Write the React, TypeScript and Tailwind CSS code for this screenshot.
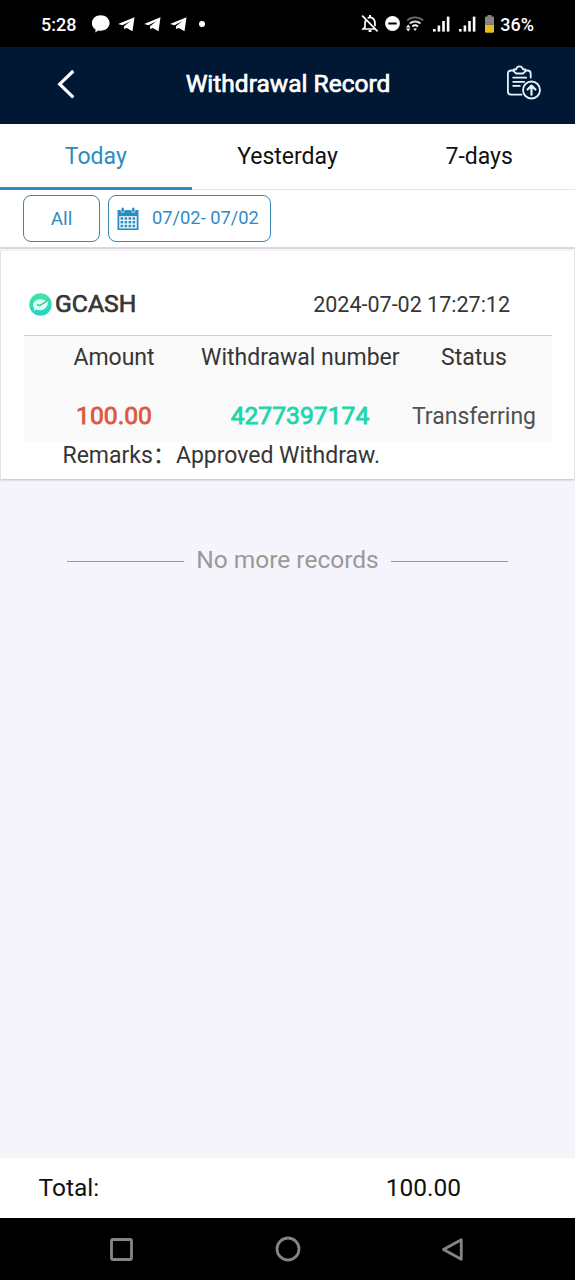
/*
  Withdrawal Record — mobile screen listing withdrawals for a chosen period.

  Layout:
    Top    — Android status bar, page header, period tabs, filter chips
    Middle — Record cards followed by the "No more records" divider
    Bottom — Running total and the Android navigation bar
*/
import { useState } from "react";

const tabs = ["Today", "Yesterday", "7-days"];

const records = [
  {
    method: "GCASH",
    date: "2024-07-02 17:27:12",
    amount: "100.00",
    number: "4277397174",
    status: "Transferring",
    remarks: "Approved Withdraw.",
  },
];

function PlaneIcon() {
  return (
    <svg className="h-[15px] w-[17px]" viewBox="0 0 17 15" fill="currentColor">
      <path d="M16.500.2 14.500 14.300 8.800 11 6.200 12 6 9.300 12.300 4.200 4.500 8.200.1 7Z" />
    </svg>
  );
}

function SignalIcon() {
  return (
    <svg className="h-4 w-[17px]" viewBox="0 0 17 16" fill="currentColor">
      <rect x="0" y="13" width="2.6" height="2.6" />
      <rect x="4.6" y="9.5" width="2.6" height="6.1" />
      <rect x="9.2" y="5" width="2.6" height="10.6" />
      <rect x="13.8" y="0.6" width="2.6" height="15" />
    </svg>
  );
}

function StatusBar() {
  return (
    <div className="flex h-[47px] shrink-0 items-center bg-black pl-[41px] text-[18px] font-medium text-white">
      <span className="w-[50px] pt-px">5:28</span>
      {/* Notifications */}
      <div className="flex items-center">
        <svg className="mr-[8px] h-[18px] w-[19px]" viewBox="0 0 19 18" fill="currentColor">
          <path d="M9.700.3C14.800.3 18.600 3.700 18.600 8.100S14.800 15.800 9.700 15.800C8.700 15.800 7.800 15.800 7 15.600L4.400 17.500 4.500 14.500C2.100 13.100.9 10.900.9 8.100.9 3.700 4.700.3 9.700.3Z" />
        </svg>
        <div className="mt-[2px] flex gap-[9px]">
          <PlaneIcon />
          <PlaneIcon />
          <PlaneIcon />
        </div>
        <span className="ml-[12px] size-[6px] rounded-full bg-white" />
      </div>

      {/* System icons */}
      <div className="ml-auto flex items-center pr-[41px]">
        <svg className="h-[19px] w-[18px]" viewBox="0 0 18 19" fill="none" stroke="currentColor" strokeWidth="1.700">
          <path d="M1.200 1.600 16.600 17.400M5.200 5.600C4.200 6.800 4 8 4 9.600V13.200L2.200 15H13.800M6.700 4.200C8 3.200 10.200 3.200 11.600 4.200 13.400 5.300 14 7 14 9.500V12.200" />
          <path d="M9 1V3.200M7.600 17H10.400" strokeWidth="2" />
        </svg>
        <svg className="ml-[6px] size-[15px]" viewBox="0 0 15 15">
          <circle cx="7.500" cy="7.500" r="7.400" fill="white" />
          <rect x="3.300" y="6.500" width="8.400" height="2" fill="black" />
        </svg>
        <svg className="ml-[6px] h-[16px] w-[18px]" viewBox="0 0 18 16" fill="none" strokeWidth="1.900">
          <path d="M1.200 4.400C5.700.3 12.500.3 17 4.400" stroke="#6b6b6b" />
          <path d="M3.800 7.500C6.800 4.800 11.500 4.800 14.500 7.500" stroke="#dedede" />
          <path d="M6.300 10.400C8 9 10.200 9 12 10.400" stroke="white" />
          <path d="M7.300 12.600H10.900L9.100 15Z" fill="white" />
          <path d="M0 11.600 2.200 8.500 4.400 11.600ZM0 12.400 2.200 15.500 4.400 12.400Z" fill="white" />
        </svg>
        <div className="ml-[9px] flex gap-[9px]">
          <SignalIcon />
          <SignalIcon />
        </div>
        <svg className="ml-[9px] h-[18px] w-[9px]" viewBox="0 0 9 18">
          <path d="M2.500 0H6.500V1.500H8.200L9 2.300V9.700H0V2.300L.8 1.500H2.500Z" fill="#858585" />
          <path d="M0 9.700H9V16.800L8.200 17.700H.8L0 16.800Z" fill="#e8bd24" />
        </svg>
        <span className="ml-[6px] pt-px">36%</span>
      </div>
    </div>
  );
}

function Header() {
  return (
    <header className="grid h-[77px] shrink-0 grid-cols-[120px_1fr_120px] items-center bg-[#001833] text-white">
      <button aria-label="Back" className="mb-[3px] ml-[57px] w-[18px]">
        <svg className="h-[30px] w-[18px]" viewBox="0 0 18 30" fill="none" stroke="currentColor" strokeWidth="3.200">
          <path d="M16.300 2 2.700 15.200 16.300 28.400" />
        </svg>
      </button>
      <h1 className="pb-[2px] pl-px text-center text-[24.5px] whitespace-nowrap [-webkit-text-stroke:0.7px]">
        Withdrawal Record
      </h1>
      <button aria-label="Withdrawal requests" className="mb-[6px] ml-[51px] w-[36px]">
        <svg
          className="h-[35px] w-[36px]"
          viewBox="0 0 36 35"
          fill="none"
          stroke="#e6f4ff"
          strokeWidth="1.800"
          strokeLinecap="round"
          strokeLinejoin="round"
        >
          <path d="M7.500 5.500H5.500C3.100 5.500 1.900 6.500 1.900 8.700V26.500C1.900 28.700 3 29.700 5.200 29.700H15.500M19.500 5.500H21.500C23.700 5.500 24.700 6.500 24.700 8.700V12.500" />
          <path d="M7.800 4.300H10.200C10.600 2.300 11.600 1.300 13.500 1.300S16.500 2.300 16.900 4.300H19.400V6.300L17 8.500H10.200L7.800 6.300Z" />
          <path d="M7.200 12.700H20.200M7.200 16.800H18.200M7.200 20.900H13.800" />
          <circle cx="25.500" cy="25" r="8.500" />
          <path d="M25.500 29.700V20.800M21.600 24.500 25.500 20.600 29.400 24.500" strokeWidth="2.200" />
        </svg>
      </button>
    </header>
  );
}

function CalendarIcon() {
  return (
    <svg className="h-6 w-[22px]" viewBox="0 0 22 24">
      <path d="M.5 3H21.500V23H.5Z" fill="#2b8cc4" />
      <path d="M2.300 9.200H19.700V21.400H2.300Z" fill="white" />
      <g fill="#2b8cc4" stroke="white" strokeWidth="0.700">
        <rect x="4" y="0.300" width="3.400" height="5.200" rx="1.700" />
        <rect x="14.600" y="0.300" width="3.400" height="5.200" rx="1.700" />
      </g>
      <path
        d="M3.500 11.600H18.500M3.500 15.300H18.500M3.500 19H18.500"
        stroke="#2b8cc4"
        strokeWidth="2.500"
        strokeDasharray="2.700 1.300"
      />
    </svg>
  );
}

function RecordCard({ record }: { record: (typeof records)[number] }) {
  return (
    <article className="mt-[2px] h-[228px] shrink-0 border-x border-[#e2e2e6] bg-white pr-[22px] pl-[23px] text-[23px] text-[#363636] shadow-[0_1px_2px_rgba(0,0,0,0.22)]">
      <div className="flex h-[85px] items-center justify-between border-b border-[#cfcfcf] pt-[21px] pr-[42px] pl-[5px]">
        <div className="flex items-center">
          <svg className="mt-[3px] size-[23px]" viewBox="0 0 23 23">
            <defs>
              <linearGradient id="coin" x1="0" y1="0" x2="0" y2="1">
                <stop stopColor="#41e7a5" />
                <stop offset="1" stopColor="#22d3cb" />
              </linearGradient>
            </defs>
            <circle cx="11.500" cy="11.500" r="11.200" fill="url(#coin)" />
            <path
              d="M4 12.300C4 8.800 7.300 6.300 11.300 6.300 13.600 6.300 15.500 7 17 8.200L19 7.600C19.600 12.500 16.500 17 11.800 17.200 10.300 17.300 8.900 17 7.600 16.500L4.800 17.700 5.400 15.200C4.500 14.300 4 13.300 4 12.300Z"
              fill="#dcfff4"
            />
            <path d="M8 11.500 10.700 12.700 19.500 7" fill="none" stroke="#35c5a2" strokeWidth="1.400" />
          </svg>
          <span className="ml-[3px] text-[24.7px] [-webkit-text-stroke:0.7px]">{record.method}</span>
        </div>
        <span className="pt-[3px] text-[21.5px]">{record.date}</span>
      </div>

      {/* Record values */}
      <div className="grid h-[106px] grid-cols-[180px_192px_156px] grid-rows-[44px_62px] bg-[#fafafa] text-center whitespace-nowrap">
        <span className="self-center">Amount</span>
        <span className="-mx-[3px] self-center">Withdrawal number</span>
        <span className="self-center">Status</span>
        <span className="pt-[21px] text-[24.7px] leading-[30px] text-[#dc5842] [-webkit-text-stroke:0.8px]">
          {record.amount}
        </span>
        <span className="pt-[21px] text-[24.7px] leading-[30px] text-[#20d5ad] [-webkit-text-stroke:0.8px]">
          {record.number}
        </span>
        <span className="pt-[22px] leading-[30px] text-[#505050]">{record.status}</span>
      </div>
      <p className="pl-[38.5px] leading-[27px]">
        Remarks：{record.remarks}
      </p>
    </article>
  );
}

export default function App() {
  const [activeTab, setActiveTab] = useState("Today");

  return (
    <div className="flex h-[1280px] w-[575px] flex-col overflow-hidden bg-[#f5f4fc] font-[Roboto,'Noto_Sans_CJK_SC',sans-serif]">
      <StatusBar />
      <Header />

      {/* ── Period tabs ──────────────────────────────────── */}
      <nav className="grid h-[66px] shrink-0 grid-cols-3 border-b border-[#e5e5e5] bg-white">
        {tabs.map((tab) => (
          <button
            key={tab}
            onClick={() => setActiveTab(tab)}
            className={`-mb-px border-b-[3px] pt-[3px] text-[23px]
              ${tab === activeTab
                ? "border-[#2f8cc0] text-[#2f8cc0]"
                : "border-transparent text-[#111]"
              }`}
          >
            {tab}
          </button>
        ))}
      </nav>

      {/* ── Filters ──────────────────────────────────────── */}
      <div className="flex h-[59px] shrink-0 gap-2 border-b-2 border-[#d9d9d9] bg-white pt-[5px] pl-[23px] text-[18.3px] text-[#318bc3]">
        <button className="h-[47px] w-[77px] rounded-[8px] border border-[#3c86b4] pt-px text-[19px]">All</button>
        <button className="flex h-[47px] w-[163px] items-center rounded-[8px] border border-[#3c86b4] pl-[8px]">
          <CalendarIcon />
          <span className="mb-px ml-[13px] whitespace-nowrap">07/02- 07/02</span>
        </button>
      </div>

      {/* ── Records ──────────────────────────────────────── */}
      <main className="flex flex-1 flex-col">
        {records.map((record) => (
          <RecordCard key={record.number} record={record} />
        ))}
        <div className="mt-[66px] flex items-center justify-center gap-3 text-[24.5px] leading-[30px] text-[#999]">
          <span className="mt-[3px] h-px w-[117px] bg-[#999]" />
          No more records
          <span className="mt-[3px] h-px w-[117px] bg-[#999]" />
        </div>
      </main>

      {/* ── Total ────────────────────────────────────────── */}
      <footer className="flex h-[64px] shrink-0 items-center justify-between border-t-4 border-[#f5f5f7] bg-white pr-[114px] pl-[38.5px] text-[24.5px] text-[#111]">
        <span>Total:</span>
        <span>100.00</span>
      </footer>

      {/* ── System navigation ────────────────────────────── */}
      <div className="flex h-[62px] shrink-0 items-center justify-between bg-black pr-[111px] pl-[109px]">
        <svg className="size-[25px]" viewBox="0 0 25 25" fill="none" stroke="#858585" strokeWidth="2.800">
          <rect x="2.500" y="2.500" width="20" height="20" rx="1.500" />
        </svg>
        <svg className="size-[26px]" viewBox="0 0 26 26" fill="none" stroke="#858585" strokeWidth="2.800">
          <circle cx="13" cy="13" r="11" />
        </svg>
        <svg className="h-[25px] w-[23px]" viewBox="0 0 23 25" fill="none" stroke="#858585" strokeWidth="2.800" strokeLinejoin="round">
          <path d="M20.300 2.700V22.300L2.500 12.500Z" />
        </svg>
      </div>
    </div>
  );
}
